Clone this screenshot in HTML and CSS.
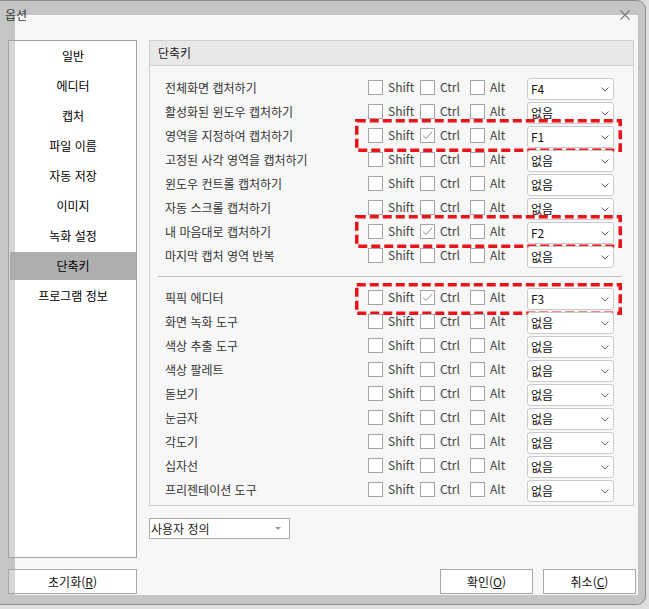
FILE: index.html
```html
<!DOCTYPE html>
<html lang="ko">
    <head>
        <meta charset="utf-8">
        <title>옵션</title>
        <meta name="viewport" content="width=device-width, initial-scale=1">
        <link rel="stylesheet" href="styles.css">
    </head>
    <body>
		<div class="window">
			<header class="titlebar">
				<span class="title">옵션</span>
				<svg class="close" width="10" height="10" viewBox="0 0 10 10">
					<path d="M0.5 0.5 L9.5 9.5 M9.5 0.5 L0.5 9.5" stroke="#7a7a7a" stroke-width="1.1" fill="none"/>
				</svg>
			</header>

			<div class="frame">
				<div class="main">
					<!-- Categories -->
					<ul class="nav">
						<li class="nav-item">일반</li>
						<li class="nav-item">에디터</li>
						<li class="nav-item">캡처</li>
						<li class="nav-item">파일 이름</li>
						<li class="nav-item">자동 저장</li>
						<li class="nav-item">이미지</li>
						<li class="nav-item">녹화 설정</li>
						<li class="nav-item active">단축키</li>
						<li class="nav-item">프로그램 정보</li>
					</ul>

					<div class="content">
						<section class="group">
							<h2 class="group-title">단축키</h2>

							<!-- Capture shortcuts -->
							<div class="rows">
								<div class="row">
									<span class="label">전체화면 캡처하기</span>
									<span class="mod mod-shift"><span class="box"></span>Shift</span>
									<span class="mod mod-ctrl"><span class="box"></span>Ctrl</span>
									<span class="mod mod-alt"><span class="box"></span>Alt</span>
									<span class="key">F4<svg class="chev" width="8" height="5" viewBox="0 0 8 5"><path d="M0.5 0.5 L4 4 L7.5 0.5" stroke="#666" fill="none"/></svg></span>
								</div>
								<div class="row">
									<span class="label">활성화된 윈도우 캡처하기</span>
									<span class="mod mod-shift"><span class="box"></span>Shift</span>
									<span class="mod mod-ctrl"><span class="box"></span>Ctrl</span>
									<span class="mod mod-alt"><span class="box"></span>Alt</span>
									<span class="key">없음<svg class="chev" width="8" height="5" viewBox="0 0 8 5"><path d="M0.5 0.5 L4 4 L7.5 0.5" stroke="#666" fill="none"/></svg></span>
								</div>
								<div class="row">
									<span class="label">영역을 지정하여 캡처하기</span>
									<span class="mod mod-shift"><span class="box"></span>Shift</span>
									<span class="mod mod-ctrl"><span class="box"><svg width="13" height="13" viewBox="0 0 13 13"><path d="M2 6.5 L5 9.5 L11 3" stroke="#8a8a8a" fill="none"/></svg></span>Ctrl</span>
									<span class="mod mod-alt"><span class="box"></span>Alt</span>
									<span class="key">F1<svg class="chev" width="8" height="5" viewBox="0 0 8 5"><path d="M0.5 0.5 L4 4 L7.5 0.5" stroke="#666" fill="none"/></svg></span>
									<svg class="mark" width="267" height="33" viewBox="0 0 267 33"><rect x="1.75" y="1.75" width="263.5" height="29.5" fill="none" stroke="#e8141a" stroke-width="3.5" stroke-dasharray="9 4"/></svg>
								</div>
								<div class="row">
									<span class="label">고정된 사각 영역을 캡처하기</span>
									<span class="mod mod-shift"><span class="box"></span>Shift</span>
									<span class="mod mod-ctrl"><span class="box"></span>Ctrl</span>
									<span class="mod mod-alt"><span class="box"></span>Alt</span>
									<span class="key">없음<svg class="chev" width="8" height="5" viewBox="0 0 8 5"><path d="M0.5 0.5 L4 4 L7.5 0.5" stroke="#666" fill="none"/></svg></span>
								</div>
								<div class="row">
									<span class="label">윈도우 컨트롤 캡처하기</span>
									<span class="mod mod-shift"><span class="box"></span>Shift</span>
									<span class="mod mod-ctrl"><span class="box"></span>Ctrl</span>
									<span class="mod mod-alt"><span class="box"></span>Alt</span>
									<span class="key">없음<svg class="chev" width="8" height="5" viewBox="0 0 8 5"><path d="M0.5 0.5 L4 4 L7.5 0.5" stroke="#666" fill="none"/></svg></span>
								</div>
								<div class="row">
									<span class="label">자동 스크롤 캡처하기</span>
									<span class="mod mod-shift"><span class="box"></span>Shift</span>
									<span class="mod mod-ctrl"><span class="box"></span>Ctrl</span>
									<span class="mod mod-alt"><span class="box"></span>Alt</span>
									<span class="key">없음<svg class="chev" width="8" height="5" viewBox="0 0 8 5"><path d="M0.5 0.5 L4 4 L7.5 0.5" stroke="#666" fill="none"/></svg></span>
								</div>
								<div class="row">
									<span class="label">내 마음대로 캡처하기</span>
									<span class="mod mod-shift"><span class="box"></span>Shift</span>
									<span class="mod mod-ctrl"><span class="box"><svg width="13" height="13" viewBox="0 0 13 13"><path d="M2 6.5 L5 9.5 L11 3" stroke="#8a8a8a" fill="none"/></svg></span>Ctrl</span>
									<span class="mod mod-alt"><span class="box"></span>Alt</span>
									<span class="key">F2<svg class="chev" width="8" height="5" viewBox="0 0 8 5"><path d="M0.5 0.5 L4 4 L7.5 0.5" stroke="#666" fill="none"/></svg></span>
									<svg class="mark" width="267" height="33" viewBox="0 0 267 33"><rect x="1.75" y="1.75" width="263.5" height="29.5" fill="none" stroke="#e8141a" stroke-width="3.5" stroke-dasharray="9 4"/></svg>
								</div>
								<div class="row">
									<span class="label">마지막 캡처 영역 반복</span>
									<span class="mod mod-shift"><span class="box"></span>Shift</span>
									<span class="mod mod-ctrl"><span class="box"></span>Ctrl</span>
									<span class="mod mod-alt"><span class="box"></span>Alt</span>
									<span class="key">없음<svg class="chev" width="8" height="5" viewBox="0 0 8 5"><path d="M0.5 0.5 L4 4 L7.5 0.5" stroke="#666" fill="none"/></svg></span>
								</div>
							</div>

							<hr class="sep">

							<!-- Tool shortcuts -->
							<div class="rows">
								<div class="row">
									<span class="label">픽픽 에디터</span>
									<span class="mod mod-shift"><span class="box"></span>Shift</span>
									<span class="mod mod-ctrl"><span class="box"><svg width="13" height="13" viewBox="0 0 13 13"><path d="M2 6.5 L5 9.5 L11 3" stroke="#8a8a8a" fill="none"/></svg></span>Ctrl</span>
									<span class="mod mod-alt"><span class="box"></span>Alt</span>
									<span class="key">F3<svg class="chev" width="8" height="5" viewBox="0 0 8 5"><path d="M0.5 0.5 L4 4 L7.5 0.5" stroke="#666" fill="none"/></svg></span>
									<svg class="mark mark-low" width="267" height="32" viewBox="0 0 267 32"><rect x="1.75" y="1.75" width="263.5" height="28.5" fill="none" stroke="#e8141a" stroke-width="3.5" stroke-dasharray="9 4"/></svg>
								</div>
								<div class="row">
									<span class="label">화면 녹화 도구</span>
									<span class="mod mod-shift"><span class="box"></span>Shift</span>
									<span class="mod mod-ctrl"><span class="box"></span>Ctrl</span>
									<span class="mod mod-alt"><span class="box"></span>Alt</span>
									<span class="key">없음<svg class="chev" width="8" height="5" viewBox="0 0 8 5"><path d="M0.5 0.5 L4 4 L7.5 0.5" stroke="#666" fill="none"/></svg></span>
								</div>
								<div class="row">
									<span class="label">색상 추출 도구</span>
									<span class="mod mod-shift"><span class="box"></span>Shift</span>
									<span class="mod mod-ctrl"><span class="box"></span>Ctrl</span>
									<span class="mod mod-alt"><span class="box"></span>Alt</span>
									<span class="key">없음<svg class="chev" width="8" height="5" viewBox="0 0 8 5"><path d="M0.5 0.5 L4 4 L7.5 0.5" stroke="#666" fill="none"/></svg></span>
								</div>
								<div class="row">
									<span class="label">색상 팔레트</span>
									<span class="mod mod-shift"><span class="box"></span>Shift</span>
									<span class="mod mod-ctrl"><span class="box"></span>Ctrl</span>
									<span class="mod mod-alt"><span class="box"></span>Alt</span>
									<span class="key">없음<svg class="chev" width="8" height="5" viewBox="0 0 8 5"><path d="M0.5 0.5 L4 4 L7.5 0.5" stroke="#666" fill="none"/></svg></span>
								</div>
								<div class="row">
									<span class="label">돋보기</span>
									<span class="mod mod-shift"><span class="box"></span>Shift</span>
									<span class="mod mod-ctrl"><span class="box"></span>Ctrl</span>
									<span class="mod mod-alt"><span class="box"></span>Alt</span>
									<span class="key">없음<svg class="chev" width="8" height="5" viewBox="0 0 8 5"><path d="M0.5 0.5 L4 4 L7.5 0.5" stroke="#666" fill="none"/></svg></span>
								</div>
								<div class="row">
									<span class="label">눈금자</span>
									<span class="mod mod-shift"><span class="box"></span>Shift</span>
									<span class="mod mod-ctrl"><span class="box"></span>Ctrl</span>
									<span class="mod mod-alt"><span class="box"></span>Alt</span>
									<span class="key">없음<svg class="chev" width="8" height="5" viewBox="0 0 8 5"><path d="M0.5 0.5 L4 4 L7.5 0.5" stroke="#666" fill="none"/></svg></span>
								</div>
								<div class="row">
									<span class="label">각도기</span>
									<span class="mod mod-shift"><span class="box"></span>Shift</span>
									<span class="mod mod-ctrl"><span class="box"></span>Ctrl</span>
									<span class="mod mod-alt"><span class="box"></span>Alt</span>
									<span class="key">없음<svg class="chev" width="8" height="5" viewBox="0 0 8 5"><path d="M0.5 0.5 L4 4 L7.5 0.5" stroke="#666" fill="none"/></svg></span>
								</div>
								<div class="row">
									<span class="label">십자선</span>
									<span class="mod mod-shift"><span class="box"></span>Shift</span>
									<span class="mod mod-ctrl"><span class="box"></span>Ctrl</span>
									<span class="mod mod-alt"><span class="box"></span>Alt</span>
									<span class="key">없음<svg class="chev" width="8" height="5" viewBox="0 0 8 5"><path d="M0.5 0.5 L4 4 L7.5 0.5" stroke="#666" fill="none"/></svg></span>
								</div>
								<div class="row">
									<span class="label">프리젠테이션 도구</span>
									<span class="mod mod-shift"><span class="box"></span>Shift</span>
									<span class="mod mod-ctrl"><span class="box"></span>Ctrl</span>
									<span class="mod mod-alt"><span class="box"></span>Alt</span>
									<span class="key">없음<svg class="chev" width="8" height="5" viewBox="0 0 8 5"><path d="M0.5 0.5 L4 4 L7.5 0.5" stroke="#666" fill="none"/></svg></span>
								</div>
							</div>
						</section>

						<div class="preset">
							<span>사용자 정의</span>
							<svg width="6" height="3" viewBox="0 0 6 3"><path d="M0 0 L6 0 L3 3 Z" fill="#999"/></svg>
						</div>
					</div>
				</div>

				<footer class="footer">
					<button class="btn btn-reset">초기화(<u>R</u>)</button>
					<button class="btn btn-ok">확인(<u>O</u>)</button>
					<button class="btn btn-cancel">취소(<u>C</u>)</button>
				</footer>
			</div>
		</div>
    </body>
</html>
```

FILE: styles.css
```css
/* Reset */
*,
*::after,
*::before {
	margin: 0;
	padding: 0;
	box-sizing: border-box;
}

/* Base */
body {
	font-family: "Noto Sans CJK KR", sans-serif;
	font-size: 12px;
	line-height: 16px;
	color: #000;
	background: #dedede;
	width: 649px;
	height: 609px;
	overflow: hidden;
}

/* Window frame */
.window {
	width: 646px;
	height: 605px;
	background: #c5c5c5;
	border: 1px solid #8c8c8c;
	border-left: none;
	border-radius: 0 9px 9px 0;
}

.titlebar {
	position: relative;
	z-index: 1;
	display: flex;
	justify-content: space-between;
	align-items: flex-start;
	height: 14px;
	padding-left: 5px;
}
.title {
	padding-top: 6px;
	font-size: 12px;
	color: #3c3c3c;
}
.close {
	margin-top: 9px;
	margin-right: 15px;
}

.frame {
	display: flex;
	flex-direction: column;
	width: 630px;
	height: 580px;
	margin-left: 8px;
	padding-top: 25px;
	background: linear-gradient(to right, transparent 7px, #f7f7f7 7px);
}

.main {
	display: flex;
	gap: 12px;
	height: 518px;
}

/* Categories */
.nav {
	list-style: none;
	width: 129px;
	border: 1px solid #a3a3a3;
	background: linear-gradient(to right, #d6d6d6 6px, #fff 6px);
}
.nav-item {
	height: 30px;
	line-height: 28px;
	text-align: center;
	border: 1px solid transparent;
	border-right: none;
	background-clip: padding-box;
}
.nav-item.active {
	background-color: #adadad;
}

/* Shortcut group */
.content {
	width: 485px;
}
.group {
	height: 466px;
	border: 1px solid #d0d0d0;
}
.group-title {
	height: 25px;
	padding-left: 8px;
	font-size: 12px;
	font-weight: normal;
	line-height: 24px;
	color: #222;
	background: #e8e8e8;
	border-bottom: 1px solid #d3d3d3;
}
.rows:first-of-type {
	padding-top: 10px;
}
.sep {
	height: 0;
	margin: 8px 11px 9px 8px;
	border: none;
	border-top: 1px solid #c3c3c3;
}

.row {
	position: relative;
	display: flex;
	align-items: center;
	height: 24px;
	padding-left: 15px;
}
.label {
	width: 203px;
	color: #333;
	white-space: nowrap;
}
.mod {
	display: flex;
	align-items: center;
	gap: 5px;
	color: #444;
	margin-bottom: 2px;
}
.mod-shift {
	width: 52px;
}
.mod-ctrl {
	width: 50px;
}
.mod-alt {
	width: 57px;
}
.box {
	display: flex;
	width: 15px;
	height: 15px;
	border: 1px solid #a4a4a4;
	background: #fff;
}
.key {
	display: flex;
	justify-content: space-between;
	align-items: center;
	align-self: flex-end;
	width: 87px;
	height: 22px;
	padding: 0 4px 0 3px;
	background: #fff;
	border: 1px solid #cacaca;
	border-radius: 3px;
	color: #111;
}
.chev {
	margin-top: 1px;
}

/* Red highlight around edited shortcuts */
.mark {
	position: absolute;
	left: 205px;
	top: -5px;
}
.mark.mark-low {
	top: -3px;
}

.preset {
	display: flex;
	justify-content: space-between;
	align-items: center;
	width: 141px;
	height: 21px;
	margin-top: 12px;
	padding: 0 8px 0 1px;
	background: #fff;
	border: 1px solid #ababab;
	color: #222;
}

/* Buttons */
.footer {
	display: flex;
	gap: 10px;
	height: 25px;
	margin-top: 11px;
}
.btn {
	width: 93px;
	height: 25px;
	font-family: inherit;
	font-size: 12px;
	color: #111;
	background: #fff;
	border: 1px solid #a8a8a8;
}
.btn-reset {
	width: 129px;
	background: linear-gradient(to right, #d6d6d6 6px, #fff 6px);
}
.btn-ok {
	margin-left: auto;
}
.btn-cancel {
	margin-right: 2px;
}
```
